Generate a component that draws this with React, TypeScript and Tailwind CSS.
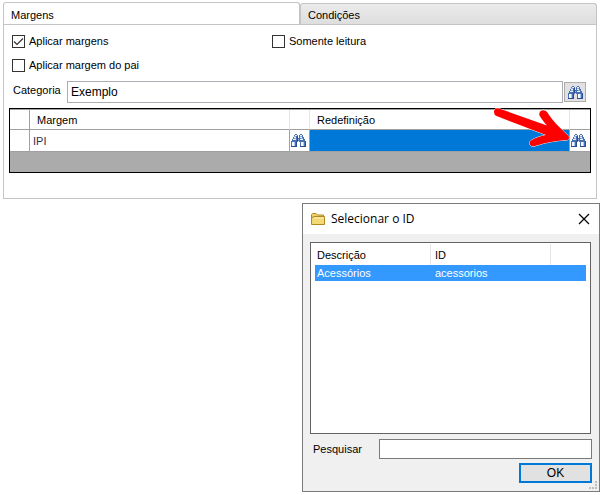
import { useState } from 'react';

function Binoculars() {
  return (
    <svg width="15" height="13" viewBox="0 0 15 13" shapeRendering="crispEdges" aria-hidden="true">
      <path
        d="M4 0h2v1h1v3h1V1h1V0h2v1h1v2h1v2h1v2h1v6H9V8H8V7H7v1H6v5H0V7h1V5h1V3h1V1h1z"
        fill="#4a70b4"
      />
      <path d="M4 1h2v1H4zM9 1h2v1H9zM3 3h2v1H3zM9 3h2v1H9zM2 5h3v1H2zM9 5h3v1H9z" fill="#e9f1ff" />
      <path d="M3 2h2v1H3zM9 2h2v1H9zM3 4h2v1H3zM10 4h2v1h-2zM7 5h1v1H7z" fill="#8facdc" />
      <path d="M1 8h2v4H1zM10 8h2v4h-2z" fill="#f4f8ff" />
      <path d="M3 8h1v4H3zM12 8h1v4h-1z" fill="#a9c8f4" />
      <path d="M5 7h1v6H5zM14 7h1v6h-1zM6 2h1v5H6zM0 12h6v1H0zM9 12h6v1H9z" fill="#2a4d92" />
    </svg>
  );
}

function Check({ label, initial = false }: { label: string; initial?: boolean }) {
  const [on, setOn] = useState(initial);
  return (
    <label className="flex h-6 items-center gap-1">
      <span className="relative flex">
        <input
          type="checkbox"
          checked={on}
          onChange={() => setOn(!on)}
          className="size-[13px] appearance-none border border-[#333333] bg-white"
        />
        {on && (
          <svg className="pointer-events-none absolute inset-0" width="13" height="13" viewBox="0 0 13 13" aria-hidden="true">
            <path d="M2 6.500 5 9.500l6-6" fill="none" stroke="#333333" strokeWidth="1.200" />
          </svg>
        )}
      </span>
      {label}
    </label>
  );
}

function LookupCell({ label }: { label: string }) {
  return (
    <td className="border-r border-b border-[#a0a0a0] bg-white last:border-r-0">
      <button type="button" aria-label={label} className="flex h-5 w-full items-center pl-px">
        <Binoculars />
      </button>
    </td>
  );
}

function Arrow() {
  return (
    <svg
      className="pointer-events-none absolute -top-1 right-4 z-10"
      width="84"
      height="46"
      viewBox="490 105 84 46"
      aria-hidden="true"
    >
      <path
        d="M494 112C494 108.500 497 107.500 500.500 109L547 125.500C544 122 541 118.500 539.500 115.500C538 110.500 544 108 547.500 112.500C551 119 560 128 568.500 136Q570 138.500 567.500 140C556 140.500 545 142.500 535 146C530.500 147.500 527.500 143 531 140.500C536 137.500 541 136 546 135L496.500 116Q494 115 494 112Z"
        fill="#ff0000"
        stroke="#ffffff"
        strokeWidth="1"
        paintOrder="stroke"
      />
    </svg>
  );
}

function MarginsPanel() {
  return (
    <section>
      <div role="tablist" className="grid h-[22px] grid-cols-2">
        <button
          type="button"
          role="tab"
          aria-selected="true"
          className="rounded-t-[3px] border border-b-0 border-[#c4c4c4] bg-white px-[7px] pt-0.5 text-left"
        >
          Margens
        </button>
        <button
          type="button"
          role="tab"
          aria-selected="false"
          className="mt-px rounded-t-[3px] border border-b-0 border-[#c4c4c4] bg-linear-to-b from-[#ebebeb] to-[#dedede] px-[7px] pt-px text-left"
        >
          Condições
        </button>
      </div>
      <div role="tabpanel" className="border border-[#c4c4c4] px-[5px] pt-1 pb-[25px]">
        <div className="grid grid-cols-[260px_1fr] px-[3px]">
          <Check label="Aplicar margens" initial />
          <Check label="Somente leitura" />
          <Check label="Aplicar margem do pai" />
        </div>
        <div className="mt-1 flex items-center pr-[5px] pl-1">
          <label htmlFor="categoria" className="w-[54px] pb-1">
            Categoria
          </label>
          <input
            id="categoria"
            defaultValue="Exemplo"
            className="h-[22px] min-w-0 flex-1 border border-[#abadb3] bg-white px-[3px] text-xs"
          />
          <button
            type="button"
            aria-label="Selecionar categoria"
            className="ml-px flex h-5 w-[22px] items-center justify-center border border-[#adadad] bg-[#e1e1e1]"
          >
            <Binoculars />
          </button>
        </div>
        <div className="relative mt-[5px] border border-black bg-[#ababab] pb-5">
          <table className="w-full table-fixed border-separate border-spacing-0 border-t border-[#a0a0a0] text-left">
            <colgroup>
              <col className="w-5" />
              <col />
              <col className="w-5" />
              <col />
              <col className="w-5" />
            </colgroup>
            <thead>
              <tr className="h-5 bg-white">
                <th className="border-r border-b border-[#a0a0a0]" />
                <th className="border-r border-b border-r-[#e5e5e5] border-b-[#a0a0a0] px-[7px] font-normal">Margem</th>
                <th className="border-r border-b border-r-[#e5e5e5] border-b-[#a0a0a0]" />
                <th className="border-r border-b border-r-[#e5e5e5] border-b-[#a0a0a0] px-[7px] font-normal">Redefinição</th>
                <th className="border-b border-[#a0a0a0]" />
              </tr>
            </thead>
            <tbody>
              <tr className="h-[22px]">
                <td className="border-r border-b border-[#a0a0a0] bg-white" />
                <td className="border-r border-b border-[#a0a0a0] bg-white px-[3px] text-[#333344]">IPI</td>
                <LookupCell label="Selecionar margem" />
                <td className="border-r border-b border-[#a0a0a0] bg-[#0078d7]" />
                <LookupCell label="Selecionar redefinição" />
              </tr>
            </tbody>
          </table>
          <Arrow />
        </div>
      </div>
    </section>
  );
}

function FolderIcon() {
  return (
    <svg width="16" height="14" viewBox="0 0 16 14" aria-hidden="true">
      <path d="M1.500 12V2.500L2.500 1.500H6L7.500 3H13.500V5" fill="#efd16b" stroke="#b08a1e" />
      <path d="M1.500 12.500V6L4 4.500H14.500V12.500Z" fill="#f3d878" stroke="#b08a1e" />
      <path d="M4 6H13.500" stroke="#fff3bd" />
    </svg>
  );
}

function SelectDialog() {
  return (
    <section
      role="dialog"
      aria-labelledby="dialog-title"
      className="mt-1 w-[298px] self-end border border-[#7a7a7a] bg-[#f0f0f0]"
    >
      <header className="flex h-[30px] items-center bg-white pr-[9px] pl-[7px]">
        <FolderIcon />
        <h1 id="dialog-title" className="ml-[5px] flex-1 font-['Open_Sans',sans-serif] text-xs">
          Selecionar o ID
        </h1>
        <button type="button" aria-label="Fechar">
          <svg width="12" height="12" viewBox="0 0 12 12" aria-hidden="true">
            <path d="M1 1 11 11M11 1 1 11" stroke="#000000" strokeWidth="1.200" />
          </svg>
        </button>
      </header>
      <div className="relative px-[7px] py-2">
        <div className="mr-px h-48 border border-[#646464] bg-white px-1 pt-px">
          <table className="w-full table-fixed border-separate border-spacing-0 text-left">
            <colgroup>
              <col className="w-[116px]" />
              <col className="w-[120px]" />
              <col />
            </colgroup>
            <thead>
              <tr className="h-[21px]">
                <th className="border-r border-[#e5e5e5] px-0.5 font-normal">Descrição</th>
                <th className="border-r border-[#e5e5e5] px-1 font-normal">ID</th>
                <th />
              </tr>
            </thead>
            <tbody>
              <tr className="h-4 bg-[#3399ff] text-white">
                <td className="px-0.5">Acessórios</td>
                <td className="px-1">acessorios</td>
                <td />
              </tr>
            </tbody>
          </table>
        </div>
        <div className="mt-[5px] flex items-center pl-[3px]">
          <label htmlFor="pesquisar" className="w-[66px]">
            Pesquisar
          </label>
          <input id="pesquisar" className="h-5 min-w-0 flex-1 border border-[#7a7a7a] bg-white px-1" />
        </div>
        <div className="mt-1 flex justify-end">
          <button type="button" className="h-5 w-[73px] border-2 border-[#0078d7] bg-[#e1e1e1] text-xs leading-4">
            OK
          </button>
        </div>
        <svg className="absolute right-0.5 bottom-0.5" width="8" height="8" viewBox="0 0 8 8" aria-hidden="true">
          <path d="M6 0h2v2H6zM6 3h2v2H6zM6 6h2v2H6zM3 6h2v2H3zM0 6h2v2H0z" fill="#bfbfbf" />
        </svg>
      </div>
    </section>
  );
}

export default function App() {
  return (
    <main className="flex min-h-screen flex-col bg-white px-[3px] pt-0.5 font-['Liberation_Sans',Arial,sans-serif] text-[11px] leading-4 text-black">
      <div className="mr-[3px]">
        <MarginsPanel />
      </div>
      <SelectDialog />
    </main>
  );
}
